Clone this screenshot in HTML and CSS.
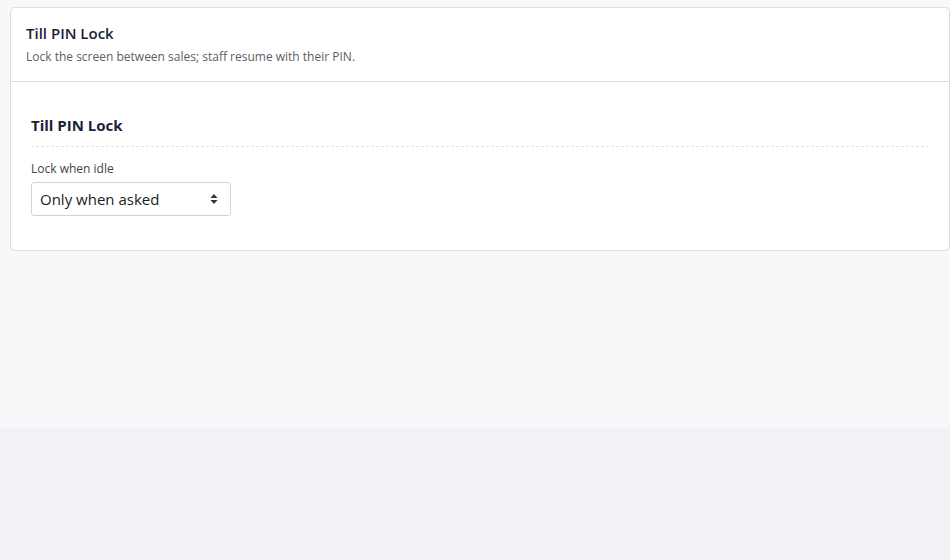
FILE: index.html
```html
<!DOCTYPE html>
<html>
<head>
  <title>Till PIN Lock</title>
  <link rel="stylesheet" href="styles.css">
</head>
<body>
  <div class="page">
    <div class="card">
      <div class="card-header">
        <h2>Till PIN Lock</h2>
        <p>Lock the screen between sales; staff resume with their PIN.</p>
      </div>
      <div class="card-body">
        <h3 class="section-title">Till PIN Lock</h3>
        <label class="field-label" for="idle">Lock when idle</label>
        <div class="select-wrap">
          <select id="idle">
            <option>Only when asked</option>
            <option>After 1 minute</option>
            <option>After 5 minutes</option>
          </select>
          <svg class="arrows" width="8" height="12" viewBox="0 0 8 12">
            <path d="M4 1 L7.5 5 H0.5 Z M4 11 L7.5 7 H0.5 Z" fill="#333"/>
          </svg>
        </div>
      </div>
    </div>
  </div>
</body>
</html>
```
FILE: styles.css
```css
body {
  margin: 0;
  background: #f1f2f6;
  font-family: "Open Sans", "Noto Sans", sans-serif;
  color: #222;
}
.page {
  background: #f7f8fa;
  min-height: 430px;
  padding: 7px 0 0 10px;
  box-sizing: border-box;
  border-bottom: 1px solid #eef0f4;
}
.card {
  background: #fff;
  border: 1px solid #d9dce1;
  border-radius: 5px;
}
.card-header {
  padding: 15px 15px 16px;
  border-bottom: 1px solid #d9dce1;
}
.card-header h2 {
  margin: 0;
  font-size: 15px;
  font-weight: 600;
  color: #1a1f3a;
}
.card-header p {
  margin: 5px 0 0;
  font-size: 12px;
  color: #5a5e66;
}
.card-body {
  padding: 33px 20px 34px;
}
.section-title {
  margin: 0 0 13px;
  padding-bottom: 11px;
  font-size: 15px;
  font-weight: 700;
  color: #1a1f3a;
  border-bottom: 1px dashed #e2e4e8;
}
.field-label {
  display: block;
  font-size: 12px;
  color: #444;
  margin-bottom: 5px;
}
.select-wrap {
  position: relative;
  width: 200px;
}
.select-wrap select {
  appearance: none;
  width: 100%;
  height: 34px;
  padding: 0 8px;
  font-family: inherit;
  font-size: 15px;
  color: #222;
  background: #fff;
  border: 1px solid #cfd3d8;
  border-radius: 3px;
}
.arrows {
  position: absolute;
  right: 13px;
  top: 11px;
  pointer-events: none;
}
```
